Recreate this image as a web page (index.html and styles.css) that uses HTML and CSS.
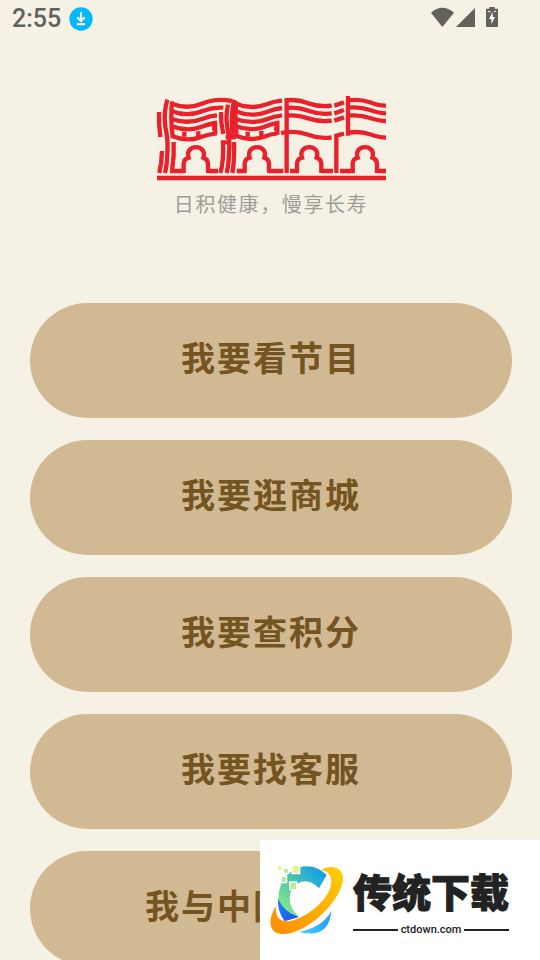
FILE: index.html
```html
<!DOCTYPE html>
<html lang="zh-CN">
<head>
<meta charset="utf-8">
<meta name="viewport" content="width=device-width, initial-scale=1">
<title>日积健康</title>
<link rel="stylesheet" href="styles.css">
</head>
<body>
<div class="status">
  <span class="clock">2:55</span>
  <svg class="download" viewBox="0 0 70 70" aria-hidden="true">
    <circle cx="35" cy="35" r="34" fill="#00b9fb"/>
    <path d="M35 15V40M24 30L35 41L46 30M23 50H47" fill="none" stroke="#fff" stroke-width="6"/>
  </svg>
  <svg class="signals" viewBox="30 18 210 66" aria-hidden="true">
    <g fill="#62615c">
      <path d="M33 38Q67 9 102 38L67 81Z"/>
      <path d="M108 81L165 24V81Z"/>
      <path d="M208 21H224V26H231Q234 26 234 29V78Q234 81 231 81H201Q198 81 198 78V29Q198 26 201 26H208Z"/>
    </g>
    <path d="M218 36L207 57H214V72L225 51H218Z" fill="#fff"/>
    <path d="M204 35H212M222 34H228" stroke="#fff" stroke-width="3"/>
  </svg>
</div>
<main class="page">
  <header class="brand">
    <svg class="logo" viewBox="3 0 720 285" role="img" aria-label="日积健康">
      <defs>
        <path id="arch" d="M-37 249V220Q-36 207 -22 203C-36 161 36 161 22 203Q35 207 36 220V249"/>
      </defs>
      <g fill="none" stroke="#e8212b" stroke-width="13">
        <path d="M27 66Q26 100 31 141M36 183Q35 220 28 249"/>
        <path d="M52 29Q40 70 46 110Q55 150 52 190Q51 225 45 249"/>
        <path d="M66 34Q61 88 68 139Q110 156 150 142Q176 132 201 130M196 134L195 99Q174 103 150 112Q110 126 66 109"/>
        <path d="M66 41Q112 60 160 40Q198 24 246 33M66 64Q112 82 160 62Q190 51 220 53M66 87Q112 104 158 86Q181 77 201 76"/>
        <path d="M103 125V140M145 124V139M186 115H200"/>
        <path d="M71 156Q73 200 66 243M60 243H104M173 243H204"/>
        <path d="M213 66Q212 100 220 132M234 44Q226 82 232 112Q241 155 237 190Q236 225 230 249M211 249Q222 210 219 157H238M227 141H259"/>
        <path d="M253 29Q243 70 246 110L248 145M252 156Q254 210 247 249"/>
        <path d="M259 34Q253 88 260 138Q301 155 342 140Q363 132 382 130M382 134V99Q361 103 342 111Q302 125 258 109"/>
        <path d="M257 41Q304 60 350 43Q374 33 396 32M257 64Q304 83 350 66Q374 56 396 54M257 87Q304 104 350 88Q374 78 396 76"/>
        <path d="M293 125V140M334 123V138M372 116H386M260 243H286M357 243H400"/>
        <path d="M410 24V249M410 31Q440 27 475 40Q510 52 545 47M410 54Q440 50 475 62Q510 75 545 70M410 77Q440 73 475 85Q510 97 545 92M393 129Q437 120 475 134Q510 148 545 142"/>
        <path d="M420 243H447M514 243H549M559 249V137L582 131M553 47L582 37M553 70L582 60M553 92L582 82"/>
        <path d="M594 18V137M594 31Q630 26 660 37Q688 48 708 47M594 53Q630 49 660 60Q688 70 708 70M594 77Q630 73 660 84Q688 93 708 93M594 128Q630 122 660 133Q688 143 708 143"/>
        <path d="M570 243H614M681 243H708M21 264H708"/>
        <use href="#arch" x="138"/>
        <use href="#arch" x="321"/>
        <use href="#arch" x="478"/>
        <use href="#arch" x="645"/>
      </g>
    </svg>
    <p class="slogan">日积健康，慢享长寿</p>
  </header>
  <nav class="menu" aria-label="主菜单">
    <button class="pill" type="button">我要看节目</button>
    <button class="pill" type="button">我要逛商城</button>
    <button class="pill" type="button">我要查积分</button>
    <button class="pill" type="button">我要找客服</button>
    <button class="pill pill-wide" type="button">我与中国</button>
  </nav>
</main>
<aside class="mark">
  <svg class="mark-icon" viewBox="21 75 240 219" aria-hidden="true">
    <defs>
      <linearGradient id="teal" x1="0" y1="1" x2="1" y2="0"><stop offset="0" stop-color="#9af57c"/><stop offset=".45" stop-color="#4fc9a8"/><stop offset="1" stop-color="#0795f5"/></linearGradient>
      <linearGradient id="gold" x1="0" y1="1" x2="1" y2="0"><stop offset="0" stop-color="#ff8a00"/><stop offset="1" stop-color="#ffcf00"/></linearGradient>
      <linearGradient id="sky" x1="0" y1="0" x2="1" y2="0"><stop offset="0" stop-color="#48d5ff"/><stop offset="1" stop-color="#269bfa"/></linearGradient>
      <linearGradient id="blue" x1="0" y1="0" x2="1" y2="1"><stop offset="0" stop-color="#168bf3"/><stop offset="1" stop-color="#234bea"/></linearGradient>
    </defs>
    <path d="M54 180Q51 220 74 250L117 237Q75 218 54 180Z" fill="url(#blue)"/>
    <path d="M200 111C157 67 88 79 62 142Q55 161 55 184Q75 226 118 237C78 204 82 154 114 136Q145 119 177 151Z" fill="url(#teal)"/>
    <path d="M117 281Q188 268 214 219Q207 290 147 286Q130 286 117 281Z" fill="url(#sky)"/>
    <path d="M183 96C212 79 250 86 249 123C248 180 149 286 70 288C26 290 21 243 49 205C42 248 73 262 119 239C174 215 224 158 212 119Q207 100 183 96Z" fill="url(#gold)"/>
    <g stroke="#fff" stroke-width="4">
      <path d="M52 82H66V98H52Z" fill="#e6f391"/><path d="M70 91H86V106H70Z" fill="#b5ef9b"/>
      <path d="M96 82H119V107H96Z" fill="#e6f391"/><path d="M63 115H80V134H63Z" fill="#b5ef9b"/><path d="M89 132H110V155H89Z" fill="#b5ef9b"/>
    </g>
  </svg>
  <div class="mark-text">
    <span class="mark-name">传统下载</span>
    <span class="mark-site">ctdown.com</span>
  </div>
</aside>
</body>
</html>
```
FILE: styles.css
```css
* {
  box-sizing: border-box;
}

html {
  background: #f5f1e5;
}

body {
  margin: 0;
  height: 100vh;
  overflow: hidden;
  font-family: Roboto, "Noto Sans CJK SC", sans-serif;
}

.status {
  display: flex;
  align-items: center;
  height: 38px;
  padding: 0 40px 0 12px;
  color: #62615c;
}

.clock {
  font-size: 25px;
  font-weight: 500;
  line-height: 38px;
}

.download {
  width: 24px;
  height: 24px;
  margin-left: 8px;
}

.signals {
  width: 70px;
  height: 22px;
  margin: 0 0 4px auto;
}

.page {
  padding: 52px 28px 0 30px;
}

.brand {
  display: flex;
  flex-direction: column;
  align-items: center;
}

.logo {
  width: 240px;
  height: 95px;
}

.slogan {
  margin: 4px 0 0;
  color: #9e9d98;
  font-family: "Noto Sans CJK SC", sans-serif;
  font-size: 20px;
  line-height: 30px;
  letter-spacing: 0.08em;
}

.menu {
  display: flex;
  flex-direction: column;
  gap: 22px;
  margin-top: 84px;
}

.pill {
  height: 115px;
  padding: 0 0 9px;
  border: 0;
  border-radius: 58px;
  background: #d1b993;
  color: #745420;
  font-family: "Noto Sans CJK SC", sans-serif;
  font-size: 34px;
  font-weight: 700;
  letter-spacing: 2px;
}

.pill-wide {
  padding-right: 108px;
}

.mark {
  position: fixed;
  right: 0;
  bottom: 0;
  display: flex;
  align-items: flex-start;
  height: 120px;
  width: 280px;
  padding: 23px 31px 0 7px;
  background: #fff;
  color: #222;
}

.mark-icon {
  flex: none;
  width: 80px;
  height: 73px;
}

.mark-text {
  flex: 1;
  margin-left: 6px;
  font-family: "Noto Sans CJK SC", sans-serif;
}

.mark-name {
  display: block;
  padding-bottom: 4px;
  font-size: 39px;
  font-weight: 900;
  line-height: 54px;
  white-space: nowrap;
  -webkit-text-stroke: 1px #222;
}

.mark-site {
  display: flex;
  align-items: center;
  gap: 3px;
  font-size: 11px;
  font-family: Roboto, sans-serif;
  font-weight: 500;
  line-height: 18px;
}

.mark-site::before,
.mark-site::after {
  content: "";
  flex: 1;
  height: 2px;
  background: #222;
}
```
